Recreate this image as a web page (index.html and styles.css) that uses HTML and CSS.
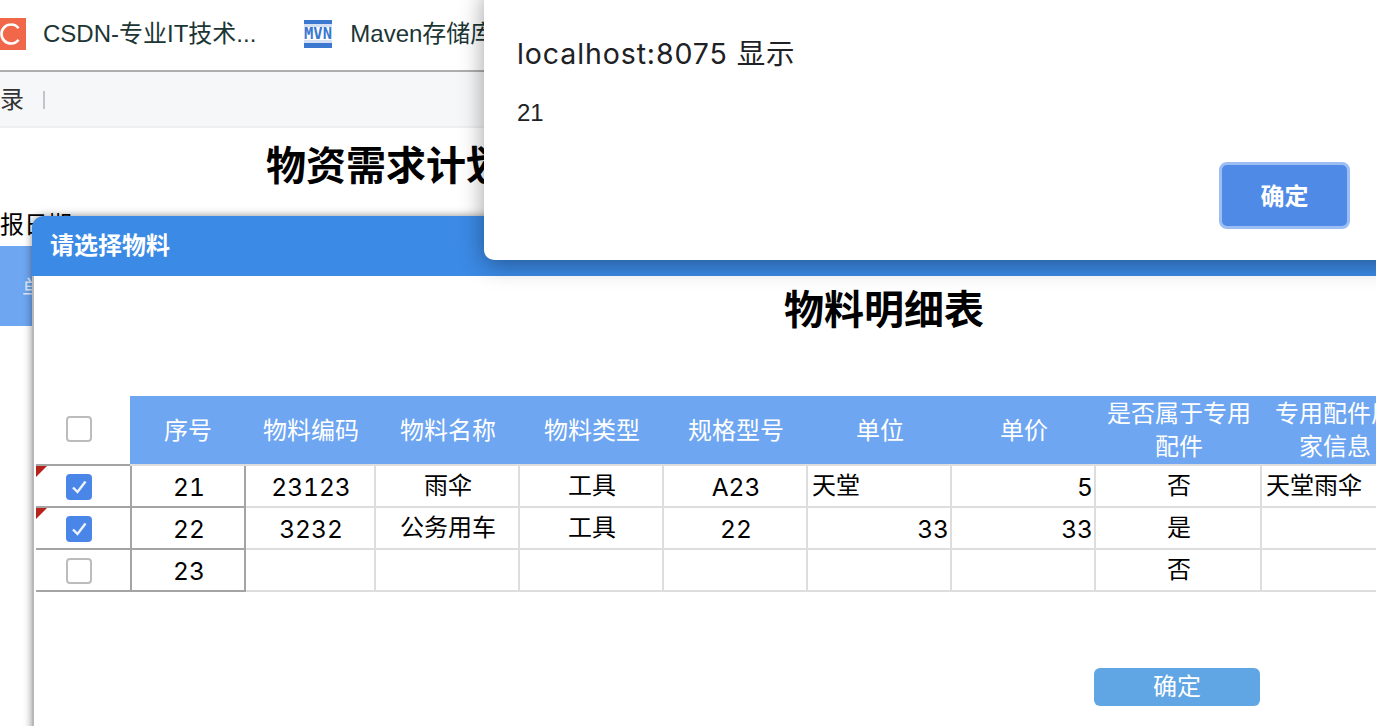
FILE: index.html
```html
<!DOCTYPE html>
<html lang="zh">
<head>
<meta charset="utf-8">
<title>物料明细表</title>
<link rel="stylesheet" href="styles.css">
</head>
<body>
<div class="bookmarks">
  <svg class="ico-csdn" width="26" height="32" viewBox="0 0 26 32"><rect width="26" height="32" fill="#f1674a"/><path d="M18.5 10.2A9 9 0 0 0 11 6.5a9.5 9.5 0 0 0 0 19 9 9 0 0 0 7.5-3.7" fill="none" stroke="#fff" stroke-width="2.6"/></svg>
  <span class="bm-text bm-first">CSDN-专业IT技术...</span>
  <svg class="ico-mvn" width="28" height="28" viewBox="0 0 28 28"><rect width="28" height="4" fill="#3b78d0"/><rect y="4" width="28" height="3" fill="#d5e0f2"/><rect y="7" width="28" height="13" fill="#fff"/><rect y="20" width="28" height="3" fill="#d5e0f2"/><rect y="23" width="28" height="5" fill="#3b78d0"/><text x="14" y="19" class="mvn-text" text-anchor="middle" textLength="28" lengthAdjust="spacingAndGlyphs">MVN</text></svg>
  <span class="bm-text bm-second">Maven存储库</span>
</div>
<div class="toolbar"><span class="tool-text">录</span><span class="tool-sep"></span></div>
<main class="page">
  <h1 class="page-title">物资需求计划</h1>
  <div class="page-date">报日期</div>
  <div class="page-band"><span class="page-band-text">单</span></div>
</main>

<section class="modal">
  <header class="modal-head">请选择物料</header>
  <h2 class="modal-title">物料明细表</h2>
  <table class="grid">
    <colgroup>
      <col class="c-check"><col class="c-seq"><col class="c-code"><col class="c-std"><col class="c-std"><col class="c-std"><col class="c-std"><col class="c-std"><col class="c-flag"><col class="c-info">
    </colgroup>
    <thead>
      <tr>
        <th class="th-check"><span class="box"></span></th>
        <th>序号</th><th>物料编码</th><th>物料名称</th><th>物料类型</th><th>规格型号</th><th>单位</th><th>单价</th><th>是否属于专用配件</th><th>专用配件厂家信息</th>
      </tr>
    </thead>
    <tbody>
      <tr>
        <td class="td-check"><i class="flag"></i><span class="box on"><svg width="26" height="26" viewBox="0 0 26 26"><path d="M7 13.5l4.5 4.5L19.5 7.5" fill="none" stroke="#eef4fe" stroke-width="2.4"/></svg></span></td>
        <td class="td-seq num">21</td><td class="num">23123</td><td>雨伞</td><td>工具</td><td class="num">A23</td><td class="left">天堂</td><td class="right num">5</td><td>否</td><td class="left">天堂雨伞</td>
      </tr>
      <tr>
        <td class="td-check"><i class="flag"></i><span class="box on"><svg width="26" height="26" viewBox="0 0 26 26"><path d="M7 13.5l4.5 4.5L19.5 7.5" fill="none" stroke="#eef4fe" stroke-width="2.4"/></svg></span></td>
        <td class="td-seq num">22</td><td class="num">3232</td><td>公务用车</td><td>工具</td><td class="num">22</td><td class="right num">33</td><td class="right num">33</td><td>是</td><td></td>
      </tr>
      <tr>
        <td class="td-check"><span class="box"></span></td>
        <td class="td-seq num">23</td><td></td><td></td><td></td><td></td><td></td><td></td><td>否</td><td></td>
      </tr>
    </tbody>
  </table>
  <div class="modal-actions"><button class="modal-ok" type="button">确定</button></div>
</section>

<aside class="alert">
  <p class="alert-title">localhost:8075 显示</p>
  <p class="alert-msg">21</p>
  <div class="alert-actions"><button class="alert-ok" type="button">确定</button></div>
</aside>
</body>
</html>
```
FILE: styles.css
```css
* { box-sizing: border-box; }
html, body { margin: 0; padding: 0; }
body {
  width: 1376px;
  height: 726px;
  overflow: hidden;
  position: relative;
  background: #fff;
  color: #000;
  font-family: "Liberation Sans", "Noto Sans CJK SC", sans-serif;
}
.bookmarks {
  height: 72px;
  display: flex;
  align-items: center;
  border-bottom: 2px solid #aeaeae;
  background: #fff;
  padding-bottom: 4px;
}
.ico-csdn { margin-top: 2px; flex: none; }
.ico-mvn { flex: none; margin-left: 48px; margin-top: 2px; }
.mvn-text { font: bold 15px "DejaVu Sans Mono", monospace; fill: #3b78d0; }
.bm-text { font-size: 24px; line-height: 32px; color: #1c3535; white-space: nowrap; margin-top: 2px; }
.bm-first { margin-left: 17px; }
.bm-second { margin-left: 18px; }
.toolbar {
  height: 56px;
  background: #f6f7f9;
  border-bottom: 2px solid #eeeff1;
  display: flex;
  align-items: center;
  padding-bottom: 3px;
}
.tool-text { font-size: 24px; color: #333; }
.tool-sep { width: 2px; height: 18px; background: #c2c4c8; margin-left: 19px; margin-top: 4px; }
.page { position: relative; }
.page-title { margin: 16px 0 0 266px; font-size: 40px; line-height: 44px; font-weight: 700; white-space: nowrap; }
.page-date { margin-top: 21px; font-size: 24px; line-height: 32px; }
.page-band { margin-top: 5px; height: 480px; background: #fff; position: relative; }
.page-band::before { content: ""; display: block; width: 32px; height: 80px; background: #6ea6f2; }
.page-band-text { position: absolute; left: 22px; top: 24px; color: #dfeafb; font-size: 22px; }

.modal {
  position: absolute;
  left: 32px;
  top: 216px;
  width: 1702px;
  height: 560px;
  background: #fff;
  border-top-left-radius: 12px;
  box-shadow: 0 0 8px rgba(0,0,0,.45);
  border-left: 2px solid #b8b8b8;
}
.modal-head {
  height: 60px;
  margin-left: -2px;
  background: #3b8ae6;
  border-top-left-radius: 12px;
  color: #fff;
  font-size: 24px;
  font-weight: 700;
  line-height: 60px;
  padding-left: 18px;
}
.modal-title {
  margin: 11px 0 0;
  height: 49px;
  text-align: center;
  font-size: 40px;
  line-height: 46px;
  font-weight: 700;
}
.grid {
  margin: 60px 0 0 2px;
  border-collapse: separate;
  border-spacing: 0;
  table-layout: fixed;
  width: 1372px;
  font-size: 24px;
}
.c-check { width: 94px; }
.c-seq { width: 116px; }
.c-code { width: 130px; }
.c-std { width: 144px; }
.c-flag { width: 166px; }
.c-info { width: 146px; }
.grid th {
  height: 70px;
  background: #6ea6f2;
  color: #fff;
  font-weight: 400;
  line-height: 33px;
  padding: 0 4px;
  border-bottom: 2px solid #ddd;
  text-align: center;
  background-clip: padding-box;
}
.grid .th-check { background: #fff; border-bottom-color: #a4a4a4; padding: 0 8px 6px 0; }
.grid td {
  height: 42px;
  padding: 0 1px 0 3px;
  border-right: 2px solid #ddd;
  border-bottom: 2px solid #ddd;
  text-align: center;
  line-height: 40px;
  white-space: nowrap;
  overflow: hidden;
}
.grid .td-check { position: relative; border-right: 0; border-bottom-color: #a4a4a4; padding: 0 8px 2px 0; line-height: 36px; }
.grid .td-seq { border-left: 2px solid #a4a4a4; border-right-color: #a4a4a4; border-bottom-color: #a4a4a4; }
.grid .left { text-align: left; padding-left: 4px; }
.grid .right { text-align: right; }
.grid .num { font-family: Inter, "Liberation Sans", sans-serif; font-size: 24.5px; font-variant-numeric: tabular-nums; padding-top: 2px; line-height: 38px; }
.flag {
  position: absolute;
  left: 0;
  top: 0;
  width: 0;
  height: 0;
  border-top: 11px solid #b5231a;
  border-right: 11px solid transparent;
}
.box {
  display: inline-block;
  vertical-align: middle;
  width: 26px;
  height: 26px;
  border: 2px solid #bcbcbc;
  border-radius: 4px;
  background: #fff;
  position: relative;
}
.box.on { border: 0; background: #4a86e8; }
.box svg { display: block; }
.modal-actions { margin: 76px 0 0 1060px; }
.modal-ok {
  display: block;
  width: 166px;
  height: 38px;
  padding: 0;
  border: 0;
  border-radius: 6px;
  background: #60a5e4;
  color: #fff;
  font: 24px "Liberation Sans", "Noto Sans CJK SC", sans-serif;
  line-height: 38px;
}

.alert {
  position: absolute;
  left: 484px;
  top: -12px;
  width: 920px;
  height: 272px;
  padding: 12px 33px 0;
  background: #fff;
  border-radius: 10px;
  box-shadow: 0 4px 24px rgba(0,0,0,.38);
  color: #202124;
}
.alert-title { margin: 36px 0 0; font-family: Inter, "Noto Sans CJK SC", sans-serif; font-size: 28.5px; letter-spacing: 0.9px; line-height: 36px; }
.alert-msg { margin: 25px 0 0; font-size: 24px; line-height: 32px; }
.alert-actions { margin: 33px 0 0 702px; }
.alert-ok {
  display: block;
  width: 131px;
  height: 67px;
  padding: 0 0 3px;
  border: 3px solid #9dbef5;
  border-radius: 8px;
  background: #4f8ae6;
  color: #fff;
  font: 700 24px "Liberation Sans", "Noto Sans CJK SC", sans-serif;
}
```
